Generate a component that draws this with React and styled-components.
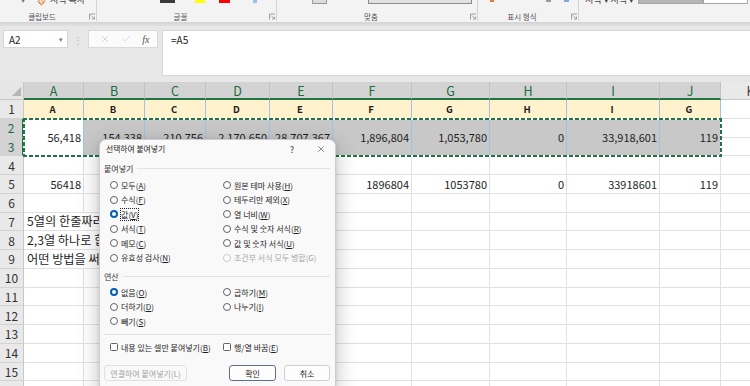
import React from 'react'
import styled, { createGlobalStyle } from 'styled-components'
import { X, Check, Paintbrush } from 'lucide-react'

const UI_FONT = `'Noto Sans CJK KR', 'Noto Sans', sans-serif`

const GlobalStyle = createGlobalStyle`
  html, body { margin: 0; padding: 0; background: #fff; overflow: hidden; }
  body { font-family: ${UI_FONT}; }
  *, *::before, *::after { box-sizing: border-box; }
`

const Screen = styled.div`
  position: relative;
  width: 750px;
  height: 386px;
  overflow: hidden;
  background: #fff;
`

/* ---------- ribbon (only its bottom edge is visible) ---------- */

const Ribbon = styled.div`
  display: flex;
  height: 22px;
  background: #f3f3f3;
  overflow: hidden;
`

const Group = styled.div`
  flex: 0 0 ${(p) => p.$w}px;
  display: flex;
  flex-direction: column;
  height: 21px;
  border-right: 1px solid ${(p) => (p.$last ? 'transparent' : '#d4d4d4')};
`

const Peek = styled.div`
  display: flex;
  align-items: flex-start;
  height: 12px;
  padding-left: ${(p) => p.$pad || 0}px;
  overflow: hidden;
  color: #444;
`

const PeekText = styled.span`
  margin: -5px 0 0 ${(p) => p.$ml || 0}px;
  font-size: ${(p) => p.$size || 8}px;
  line-height: 10px;
  white-space: nowrap;
  color: ${(p) => p.$c || '#444'};
`

const Swatch = styled.span`
  flex: 0 0 ${(p) => p.$w}px;
  height: ${(p) => p.$h || 3}px;
  margin-left: ${(p) => p.$ml || 0}px;
  background: ${(p) => p.$c};
  border: ${(p) => (p.$line ? `1px solid ${p.$line}` : 'none')};
  border-top: none;
`

const BrushIcon = styled(Paintbrush)`
  margin: -4px 0 0 ${(p) => p.$ml || 0}px;
  flex: 0 0 auto;
`

const GroupFoot = styled.div`
  display: flex;
  align-items: center;
  height: 9px;
`

const GroupLabel = styled.span`
  flex: 1;
  text-align: center;
  font-size: 7.5px;
  line-height: 9px;
  color: #555;
`

const Launcher = styled.svg`
  flex: 0 0 12px;
  width: 12px;
  height: 7px;
`

const RibbonShade = styled.div`
  height: 4px;
  background: linear-gradient(#d2d2d2, #e3e3e3);
`

const LauncherIcon = () => (
  <Launcher viewBox="0 0 12 7">
    <path d="M5.5 6.5V1H11" fill="none" stroke="#8a8a8a" strokeWidth="0.8" />
    <path d="M7 2.5L10.3 5.8M10.5 3.6V6H8.1" fill="none" stroke="#8a8a8a" strokeWidth="0.8" />
  </Launcher>
)

/* ---------- formula bar ---------- */

const FormulaBar = styled.div`
  display: flex;
  align-items: flex-start;
  height: 56px;
  padding: 4px 0 0 3px;
  background: #e7e7e7;
  font-size: 10px;
  color: #222;
`

const NameBox = styled.div`
  flex: 0 0 65px;
  height: 18px;
  display: flex;
  align-items: center;
  justify-content: space-between;
  padding: 0 4px 0 5px;
  background: #fff;
  border: 1px solid #d6d6d6;
`

const Caret = styled.span`
  font-size: 7px;
  color: #777;
`

const Grip = styled.span`
  flex: 0 0 20px;
  height: 18px;
  display: flex;
  align-items: center;
  justify-content: center;
  color: #b0b0b0;
  font-size: 10px;
`

const FxBox = styled.div`
  flex: 0 0 70px;
  height: 18px;
  display: flex;
  align-items: center;
  justify-content: space-around;
  padding: 0 2px 0 5px;
  background: #fbfbfb;
  border: 1px solid #d9d9d9;
`

const Fx = styled.span`
  font-family: 'Liberation Serif', serif;
  font-style: italic;
  font-size: 10px;
  color: #555;
`

const FormulaInput = styled.div`
  flex: 1;
  height: 46px;
  margin-left: 4px;
  padding: 3px 8px;
  background: #fff;
  border: 1px solid #d6d6d6;
  border-right: none;
  line-height: 11px;
`

/* ---------- sheet ---------- */

const WIDTHS = [24, 60, 61, 61, 64, 63, 79, 78, 77, 93, 61, 60]
const LETTERS = ['A', 'B', 'C', 'D', 'E', 'F', 'G', 'H', 'I', 'J', 'K']
const ROW1 = ['A', 'B', 'C', 'D', 'E', 'F', 'G', 'H', 'I', 'G']
const ROW2 = ['56,418', '154,338', '210,756', '2,170,650', '28,707,367', '1,896,804', '1,053,780', '0', '33,918,601', '119']
const ROW5 = ['56418', '154338', '210756', '2170650', '28707367', '1896804', '1053780', '0', '33918601', '119']
const NOTES = ['5열의 한줄짜리를 2,3열처럼', '2,3열 하나로 합치려면', '어떤 방법을 써야 할까요?']

const GREEN = '#217346'
const GRID = '#e1e1e1'
const BLUE = '#9dc3e6'

const Sheet = styled.div`
  display: grid;
  grid-template-columns: ${WIDTHS.map((w) => `${w}px`).join(' ')};
  grid-template-rows: 18px repeat(16, 18.75px);
  font-size: 11px;
  color: #1e1e1e;
`

const Corner = styled.div`
  grid-area: 1 / 1;
  display: flex;
  align-items: flex-end;
  justify-content: flex-end;
  padding: 0 2px 3px 0;
  background: #e6e6e6;
  border-right: 1px solid #c8c8c8;
  border-bottom: 1px solid #c8c8c8;

  &::after {
    content: '';
    border-left: 9px solid transparent;
    border-bottom: 9px solid #b6b6b6;
  }
`

const ColHead = styled.div`
  grid-area: 1 / ${(p) => p.$c};
  display: flex;
  align-items: center;
  justify-content: center;
  font-size: 12.5px;
  background: ${(p) => (p.$on ? '#d3d3d3' : '#e9e9e9')};
  color: ${(p) => (p.$on ? '#1c6b3e' : '#444')};
  border-right: 1px solid #c2c2c2;
  border-bottom: ${(p) => (p.$on ? `2px solid ${GREEN}` : '1px solid #c8c8c8')};
  overflow: hidden;
`

const RowHead = styled.div`
  grid-area: ${(p) => p.$r} / 1;
  display: flex;
  align-items: center;
  justify-content: center;
  font-size: 12px;
  background: ${(p) => (p.$on ? '#d3d3d3' : '#e9e9e9')};
  color: ${(p) => (p.$on ? '#1c6b3e' : '#333')};
  border-right: ${(p) => (p.$on ? `2px solid ${GREEN}` : '1px solid #c8c8c8')};
  border-bottom: 1px solid #d2d2d2;
`

const Cell = styled.div`
  grid-area: ${(p) => p.$r} / ${(p) => p.$c} / span ${(p) => p.$rs || 1} / span ${(p) => p.$cs || 1};
  display: flex;
  align-items: center;
  justify-content: ${(p) => (p.$align === 'left' ? 'flex-start' : p.$align === 'center' ? 'center' : 'flex-end')};
  padding: ${(p) => (p.$align === 'left' ? '0 0 0 3px' : '0 2px 0 0')};
  background: ${(p) => p.$fill || '#fff'};
  border-right: 1px solid ${(p) => p.$edge || GRID};
  border-bottom: 1px solid ${(p) => p.$edge || GRID};
  font-size: ${(p) => p.$size || 11}px;
  font-weight: ${(p) => (p.$bold ? 700 : 400)};
  white-space: nowrap;
  overflow: hidden;
`

const ants = (dir) => `repeating-linear-gradient(${dir}, ${GREEN} 0 4px, #fff 4px 6px)`

const Marquee = styled.div`
  grid-area: 3 / 2 / 5 / 12;
  margin: -1px;
  z-index: 1;
  pointer-events: none;
  background:
    ${ants('90deg')} top left / 100% 2px no-repeat,
    ${ants('90deg')} bottom left / 100% 2px no-repeat,
    ${ants('180deg')} top left / 2px 100% no-repeat,
    ${ants('180deg')} top right / 2px 100% no-repeat;
`

/* ---------- paste special dialog ---------- */

const Dialog = styled.div`
  position: absolute;
  left: 99px;
  top: 139px;
  width: 237px;
  padding-bottom: 10px;
  background: #f9f9f9;
  border: 1px solid #cdcdcd;
  border-radius: 7px;
  box-shadow: 0 6px 22px rgba(0, 0, 0, 0.24), 0 1px 4px rgba(0, 0, 0, 0.1);
  font-family: ${UI_FONT};
  font-size: 8px;
  color: #1f1f1f;
  z-index: 2;
`

const TitleBar = styled.div`
  display: flex;
  align-items: center;
  height: 17px;
  padding-left: 6px;
`

const TitleText = styled.span`
  font-size: 7.8px;
  color: #222;
`

const HelpButton = styled.span`
  margin-left: auto;
  margin-right: 7px;
  width: 16px;
  text-align: center;
  font-size: 8.5px;
  color: #333;
`

const CloseButton = styled.span`
  width: 28px;
  display: flex;
  justify-content: center;
  color: #333;
`

const SectionHead = styled.div`
  display: flex;
  align-items: center;
  gap: 4px;
  height: 10px;
  margin: ${(p) => p.$top}px 5px 0 4px;
  color: #333;

  &::after {
    content: '';
    flex: 1;
    height: 1px;
    background: #e2e2e2;
  }
`

const OptionGrid = styled.div`
  display: grid;
  grid-template-columns: 113px 1fr;
  grid-auto-rows: ${(p) => p.$row || 14.5}px;
  margin: ${(p) => p.$top}px 0 0 10px;
`

const Option = styled.label`
  display: flex;
  align-items: center;
  gap: 3px;
  white-space: nowrap;
  color: ${(p) => (p.$off ? '#a8a8a8' : '#1f1f1f')};
`

const OptionText = styled.span`
  outline: ${(p) => (p.$focus ? '1px dotted #222' : 'none')};
`

const Radio = styled.span`
  flex: 0 0 8px;
  width: 8px;
  height: 8px;
  border-radius: 50%;
  background: #fff;
  border: ${(p) => (p.$on ? '2.6px solid #005fb8' : `1px solid ${p.$off ? '#c9c9c9' : '#616161'}`)};
`

const Box = styled.span`
  flex: 0 0 8px;
  width: 8px;
  height: 8px;
  border-radius: 1.5px;
  background: #fff;
  border: 1px solid #616161;
`

const Rule = styled.div`
  height: 1px;
  margin: 5.5px 4px 0 4px;
  background: #e2e2e2;
`

const ButtonRow = styled.div`
  display: flex;
  align-items: center;
  gap: 8px;
  margin: 11px 5px 0 4px;
`

const Button = styled.span`
  flex: 0 0 ${(p) => p.$w}px;
  height: 16px;
  display: flex;
  align-items: center;
  justify-content: center;
  margin-left: ${(p) => (p.$push ? 'auto' : '0')};
  border-radius: 3px;
  background: ${(p) => (p.$off ? '#f9f9f9' : '#fdfdfd')};
  border: 1px solid ${(p) => (p.$primary ? '#5e6f8c' : p.$off ? '#e0e0e0' : '#d0d0d0')};
  color: ${(p) => (p.$off ? '#a3a3a3' : '#1f1f1f')};
  white-space: nowrap;
`

const PASTE = [
  { t: '모두', k: 'A' }, { t: '원본 테마 사용', k: 'H' },
  { t: '수식', k: 'F' }, { t: '테두리만 제외', k: 'X' },
  { t: '값', k: 'V', on: true, focus: true }, { t: '열 너비', k: 'W' },
  { t: '서식', k: 'T' }, { t: '수식 및 숫자 서식', k: 'R' },
  { t: '메모', k: 'C' }, { t: '값 및 숫자 서식', k: 'U' },
  { t: '유효성 검사', k: 'N' }, { t: '조건부 서식 모두 병합', k: 'G', off: true },
]

const OPS = [
  { t: '없음', k: 'O', on: true }, { t: '곱하기', k: 'M' },
  { t: '더하기', k: 'D' }, { t: '나누기', k: 'I' },
  { t: '빼기', k: 'S' },
]

const RadioOption = ({ o }) => (
  <Option $off={o.off}>
    <Radio $on={o.on} $off={o.off} />
    <OptionText $focus={o.focus}>
      {o.t}({o.off ? o.k : <u>{o.k}</u>})
    </OptionText>
  </Option>
)

const PasteSpecial = () => (
  <Dialog>
    <TitleBar>
      <TitleText>선택하여 붙여넣기</TitleText>
      <HelpButton>?</HelpButton>
      <CloseButton>
        <X size={10} strokeWidth={1.3} />
      </CloseButton>
    </TitleBar>

    <SectionHead $top={6}>붙여넣기</SectionHead>
    <OptionGrid $top={5}>
      {PASTE.map((o) => (
        <RadioOption key={o.k} o={o} />
      ))}
    </OptionGrid>

    <SectionHead $top={6}>연산</SectionHead>
    <OptionGrid $top={4}>
      {OPS.map((o) => (
        <RadioOption key={o.k} o={o} />
      ))}
    </OptionGrid>

    <Rule />
    <OptionGrid $top={5} $row={14}>
      <Option>
        <Box />
        <OptionText>
          내용 있는 셀만 붙여넣기(<u>B</u>)
        </OptionText>
      </Option>
      <Option>
        <Box />
        <OptionText>
          행/열 바꿈(<u>E</u>)
        </OptionText>
      </Option>
    </OptionGrid>

    <ButtonRow>
      <Button $w={83} $off>
        연결하여 붙여넣기(L)
      </Button>
      <Button $w={47} $push $primary>
        확인
      </Button>
      <Button $w={46}>취소</Button>
    </ButtonRow>
  </Dialog>
)

/* ---------- page ---------- */

const emptyRow = (r) =>
  WIDTHS.slice(1).map((_, i) => <Cell key={`${r}-${i}`} $r={r} $c={i + 2} />)

const Grid = () => {
  const cells = []

  cells.push(<Corner key="corner" />)
  LETTERS.forEach((l, i) =>
    cells.push(
      <ColHead key={`h-${l}`} $c={i + 2} $on={i < 10}>
        {l}
      </ColHead>
    )
  )

  // row headers 1..16 sit on grid rows 2..17
  for (let n = 1; n <= 16; n++) {
    cells.push(
      <RowHead key={`r-${n}`} $r={n + 1} $on={n === 2 || n === 3}>
        {n}
      </RowHead>
    )
  }

  // row 1: yellow titles
  ROW1.forEach((v, i) =>
    cells.push(
      <Cell key={`1-${i}`} $r={2} $c={i + 2} $fill="#fff2cc" $edge={BLUE} $align="center" $bold $size={9.5}>
        {v}
      </Cell>
    )
  )
  cells.push(<Cell key="1-k" $r={2} $c={12} />)

  // rows 2-3: merged per column, selected
  ROW2.forEach((v, i) =>
    cells.push(
      <Cell key={`2-${i}`} $r={3} $rs={2} $c={i + 2} $fill={i === 0 ? '#fff' : '#c8c8c8'} $edge={BLUE}>
        {v}
      </Cell>
    )
  )
  cells.push(<Cell key="2-k" $r={3} $c={12} />)
  cells.push(<Cell key="3-k" $r={4} $c={12} />)

  cells.push(...emptyRow(5))

  // row 5: plain values
  ROW5.forEach((v, i) =>
    cells.push(
      <Cell key={`5-${i}`} $r={6} $c={i + 2}>
        {v}
      </Cell>
    )
  )
  cells.push(<Cell key="5-k" $r={6} $c={12} />)

  cells.push(...emptyRow(7))

  // rows 7-9: text spilling over A..E
  NOTES.forEach((t, n) => {
    const r = n + 8
    cells.push(
      <Cell key={`n-${n}`} $r={r} $c={2} $cs={5} $align="left" $size={12.2}>
        {t}
      </Cell>
    )
    for (let c = 7; c <= 12; c++) cells.push(<Cell key={`n-${n}-${c}`} $r={r} $c={c} />)
  })

  for (let r = 11; r <= 17; r++) cells.push(...emptyRow(r))

  cells.push(<Marquee key="marquee" />)

  return <Sheet>{cells}</Sheet>
}

export default function App() {
  return (
    <Screen>
      <GlobalStyle />
      <Ribbon>
        <Group $w={97}>
          <Peek $pad={21}>
            <PeekText $c="#777">▾</PeekText>
            <BrushIcon size={10} color="#d9782c" strokeWidth={2} $ml={12} />
            <PeekText $ml={3} $size={9}>서식 복사</PeekText>
          </Peek>
          <GroupFoot>
            <GroupLabel>클립보드</GroupLabel>
            <LauncherIcon />
          </GroupFoot>
        </Group>
        <Group $w={180}>
          <Peek $pad={63}>
            <Swatch $w={15} $c="#3a3a3a" />
            <Swatch $w={10} $ml={20} $c="#ffff00" />
            <Swatch $w={11} $ml={14} $c="#ff0000" />
            <Swatch $w={4} $ml={23} $c="#9cc3e6" />
          </Peek>
          <GroupFoot>
            <GroupLabel>글꼴</GroupLabel>
            <LauncherIcon />
          </GroupFoot>
        </Group>
        <Group $w={201}>
          <Peek $pad={35}>
            <Swatch $w={15} $h={4} $c="#dcdcdc" $line="#9a9a9a" />
            <Swatch $w={104} $h={4} $ml={41} $c="#e2e2e2" $line="#8a8a8a" />
          </Peek>
          <GroupFoot>
            <GroupLabel>맞춤</GroupLabel>
            <LauncherIcon />
          </GroupFoot>
        </Group>
        <Group $w={101}>
          <Peek $pad={12}>
            <Swatch $w={4} $h={2} $c="#e8792f" />
            <Swatch $w={5} $h={2} $ml={52} $c="#9a9a9a" />
            <Swatch $w={5} $h={2} $ml={13} $c="#7fa9d6" />
          </Peek>
          <GroupFoot>
            <GroupLabel>표시 형식</GroupLabel>
            <LauncherIcon />
          </GroupFoot>
        </Group>
        <Group $w={171} $last>
          <Peek $pad={6}>
            <PeekText $size={9}>서식 ▾ 서식 ▾</PeekText>
            <Swatch $w={65} $h={4} $ml={4} $c="#b5b5b5" $line="#a5a5a5" />
            <Swatch $w={45} $h={4} $c="#fff" $line="#a5a5a5" />
          </Peek>
          <GroupFoot />
        </Group>
      </Ribbon>
      <RibbonShade />

      <FormulaBar>
        <NameBox>
          A2
          <Caret>▾</Caret>
        </NameBox>
        <Grip>⋮</Grip>
        <FxBox>
          <X size={10} color="#bdbdbd" strokeWidth={1.4} />
          <Check size={10} color="#bdbdbd" strokeWidth={1.4} />
          <Fx>fx</Fx>
        </FxBox>
        <FormulaInput>=A5</FormulaInput>
      </FormulaBar>

      <Grid />
      <PasteSpecial />
    </Screen>
  )
}
